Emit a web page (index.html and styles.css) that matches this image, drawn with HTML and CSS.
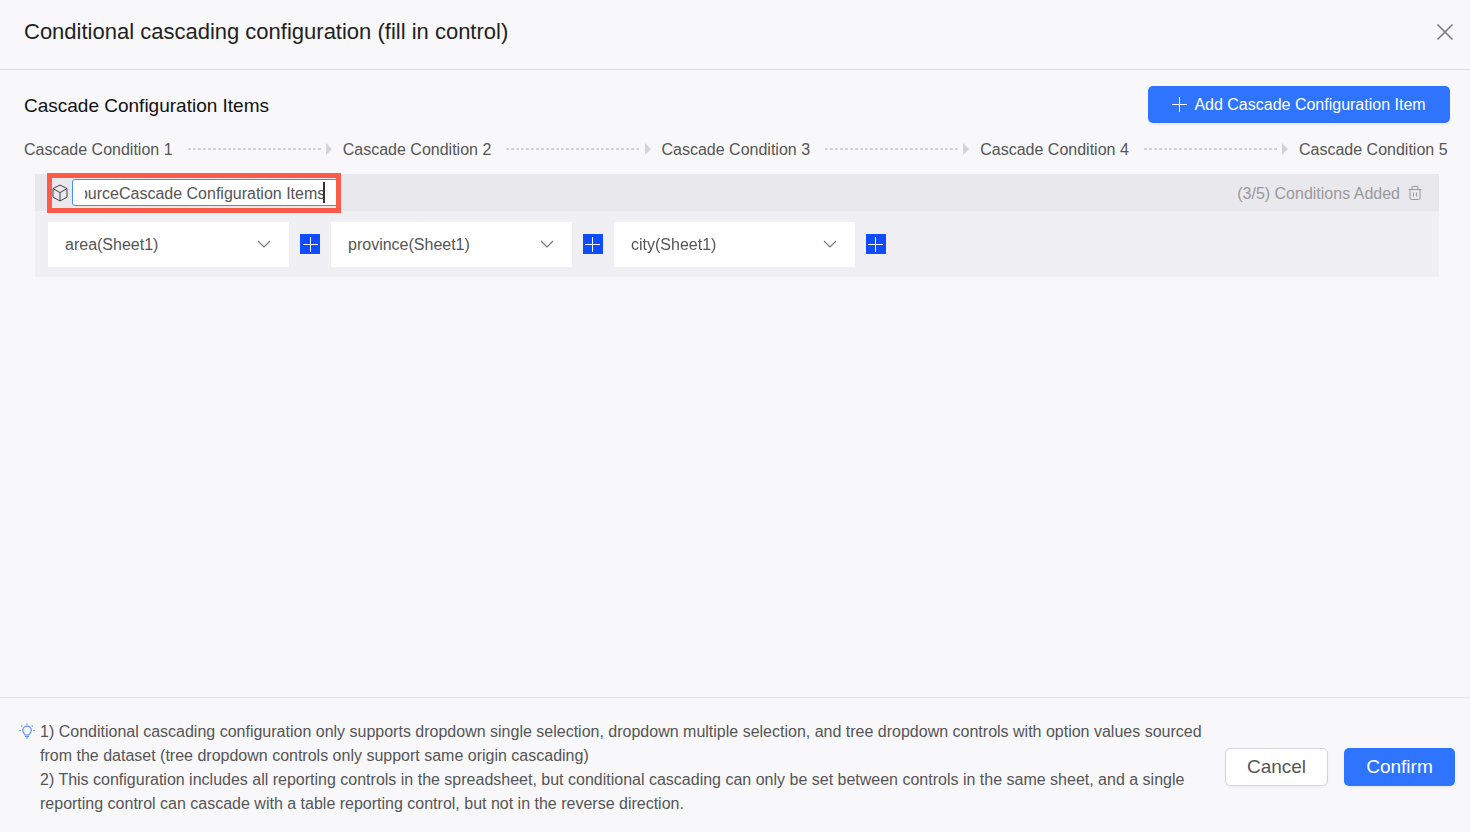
FILE: index.html
```html
<!DOCTYPE html>
<html lang="en">
     <head>
          <meta charset="UTF-8" />
          <meta
               name="viewport"
               content="width=device-width, initial-scale=1.0" />
          <title>Conditional cascading configuration</title>
          <link rel="stylesheet" href="styles.css">
     </head>
     <body>
          <header>
               <h1>Conditional cascading configuration (fill in control)</h1>
               <button type="button" class="close" aria-label="Close">
                    <svg viewBox="0 0 18 18"><path d="M1.5 1.5l15 15M16.5 1.5l-15 15" /></svg>
               </button>
          </header>

          <main>
               <div class="toolbar">
                    <h2>Cascade Configuration Items</h2>
                    <button type="button" class="primary add">
                         <svg viewBox="0 0 15 15"><path d="M7.5 0v15M0 7.5h15" /></svg>
                         Add Cascade Configuration Item
                    </button>
               </div>

               <ol class="steps">
                    <li>Cascade Condition 1</li>
                    <li>Cascade Condition 2</li>
                    <li>Cascade Condition 3</li>
                    <li>Cascade Condition 4</li>
                    <li>Cascade Condition 5</li>
               </ol>

               <section class="card">
                    <div class="card-head">
                         <div class="name-box">
                              <svg class="cube" viewBox="0 0 16 18"><path d="M8 1l7 3.6v8.6L8 17l-7-3.8V4.6zM1 4.6l7 4 7-4M8 8.6V17" /></svg>
                              <input type="text" id="itemName" aria-label="Item name" value="Data SourceCascade Configuration Items" spellcheck="false" />
                              <span class="caret"></span>
                         </div>
                         <span class="count">(3/5) Conditions Added</span>
                         <button type="button" class="trash" aria-label="Delete">
                              <svg viewBox="0 0 14 14"><path d="M.5 3.5h13M4 3.5v-3h6v3M2 3.5V12q0 1.5 1.5 1.5h7q1.5 0 1.5-1.5V3.5M5.5 6.5v4M8.5 6.5v4" /></svg>
                         </button>
                    </div>
                    <div class="card-body">
                         <div class="select">
                              <select aria-label="Condition 1"><option>area(Sheet1)</option></select>
                              <svg viewBox="0 0 14 8"><path d="M1 1l6 6 6-6" /></svg>
                         </div>
                         <button type="button" class="plus" aria-label="Add after condition 1">
                              <svg viewBox="0 0 20 20"><path d="M10.5 3v15M3 10.5h15" /></svg>
                         </button>
                         <div class="select">
                              <select aria-label="Condition 2"><option>province(Sheet1)</option></select>
                              <svg viewBox="0 0 14 8"><path d="M1 1l6 6 6-6" /></svg>
                         </div>
                         <button type="button" class="plus" aria-label="Add after condition 2">
                              <svg viewBox="0 0 20 20"><path d="M9.5 3v15M2 10.5h15" /></svg>
                         </button>
                         <div class="select">
                              <select aria-label="Condition 3"><option>city(Sheet1)</option></select>
                              <svg viewBox="0 0 14 8"><path d="M1 1l6 6 6-6" /></svg>
                         </div>
                         <button type="button" class="plus" aria-label="Add after condition 3">
                              <svg viewBox="0 0 20 20"><path d="M9.5 3v15M2 10.5h15" /></svg>
                         </button>
                    </div>
               </section>
          </main>

          <footer>
               <svg class="bulb" viewBox="0 0 16 16">
                    <path d="M6 12c0-1.2-2.3-1.9-2.3-4.5a4.3 4.3 0 0 1 8.6 0c0 2.6-2.3 3.3-2.3 4.500z" />
                    <path d="M6 13.5h4M7 15h2M8 .3v1.400M2.300 2.500l1 1M13.700 2.500l-1 1M.200 7.500h1.500M14.300 7.500h1.500" />
               </svg>
               <p>
                    1) Conditional cascading configuration only supports dropdown single selection, dropdown multiple selection, and tree dropdown controls with option values sourced from the dataset (tree dropdown controls only support same origin cascading)<br>
                    2) This configuration includes all reporting controls in the spreadsheet, but conditional cascading can only be set between controls in the same sheet, and a single reporting control can cascade with a table reporting control, but not in the reverse direction.
               </p>
               <button type="button" class="cancel">Cancel</button>
               <button type="button" class="primary confirm">Confirm</button>
          </footer>

          <script>
               let itemName = document.querySelector("#itemName");
               itemName.focus();
               itemName.setSelectionRange(itemName.value.length, itemName.value.length);
               itemName.scrollLeft = itemName.scrollWidth;
          </script>
     </body>
</html>
```
FILE: styles.css
```css
* {
     padding: 0;
     margin: 0;
     box-sizing: border-box;
}
body {
     min-height: 100vh;
     display: flex;
     flex-direction: column;
     background-color: #f8f8fa;
     color: #555;
     font-family: "Liberation Sans", Arial, sans-serif;
     font-size: 16px;
     line-height: 24px;
}
button,
input,
select {
     font: inherit;
     color: inherit;
     border: none;
     outline: none;
     background: none;
}
button {
     cursor: pointer;
}
svg {
     display: block;
     flex: none;
     fill: none;
     stroke: currentColor;
}
header {
     height: 70px;
     padding: 0 16px 5px 24px;
     display: flex;
     align-items: center;
     justify-content: space-between;
     border-bottom: 1px solid #dcdcde;
}
h1 {
     font-size: 22px;
     font-weight: 400;
     color: #222;
}
.close {
     color: #777;
}
.close svg {
     width: 18px;
     height: 18px;
     stroke-width: 1.5;
}
main {
     flex: 1;
     padding: 16px 20px 16px 24px;
}
.toolbar {
     display: flex;
     align-items: center;
     justify-content: space-between;
}
h2 {
     padding-top: 2px;
     font-size: 19px;
     font-weight: 400;
     color: #111;
}
.primary {
     background-color: #2e74ff;
     color: white;
     border-radius: 5px;
     box-shadow: 0 2px 2px rgba(0, 0, 0, 0.05);
}
.add {
     width: 302px;
     height: 37px;
     display: flex;
     align-items: center;
     justify-content: center;
     gap: 7px;
}
.add svg {
     width: 15px;
     height: 15px;
}

.steps {
     list-style-type: none;
     display: flex;
     margin: 15px 0 12px;
}
.steps li {
     display: flex;
     align-items: center;
     flex: 1;
     white-space: nowrap;
}
.steps li:last-child {
     flex: none;
     width: 151px;
}
/* dotted line and arrow head between two steps */
.steps li:not(:last-child)::before {
     content: "";
     order: 1;
     flex: 1;
     height: 2px;
     margin: 0 4px 3px 15px;
     background: repeating-linear-gradient(90deg, #d4d4d6 0 3px, transparent 3px 5px);
}
.steps li:not(:last-child)::after {
     content: "";
     order: 2;
     margin: 0 11px 2px 0;
     border: 6px solid transparent;
     border-left-color: #d4d4d6;
     border-right: none;
}

.card {
     margin: 0 11px;
     background-color: #f0eff4;
}
.card-head {
     height: 37px;
     padding: 0 17px;
     display: flex;
     align-items: center;
     background-color: #e9e8ed;
     color: #999;
}
.name-box {
     position: relative;
     display: flex;
     align-items: center;
     gap: 4px;
     color: #444;
}
/* red highlight over the field */
.name-box::after {
     content: "";
     position: absolute;
     inset: -6px -3px -7px -5px;
     border: 5px solid #ff5a4a;
     pointer-events: none;
}
.cube {
     width: 16px;
     height: 18px;
}
.name-box input {
     width: 266px;
     height: 27px;
     padding: 2px 12px 0;
     border: 1px solid #4a8cf5;
     border-radius: 3px;
     background-color: white;
     color: #555;
     caret-color: transparent;
}
.caret {
     position: absolute;
     right: 13px;
     top: 3px;
     width: 2px;
     height: 21px;
     background-color: #333;
}
.count {
     margin-left: auto;
     padding-top: 2px;
}
.trash {
     margin-left: 8px;
}
.trash svg {
     width: 14px;
     height: 14px;
}
.card-body {
     padding: 11px 13px 10px;
     display: flex;
     align-items: center;
}
.select {
     position: relative;
     width: 241px;
}
.select select {
     display: block;
     appearance: none;
     width: 100%;
     height: 45px;
     padding: 0 40px 0 17px;
     background-color: white;
}
.select svg {
     position: absolute;
     right: 18px;
     top: 18px;
     width: 14px;
     height: 8px;
     stroke-width: 1.2;
     color: #777;
     pointer-events: none;
}
.plus {
     margin: 0 11px 2px;
     background-color: #0f4bff;
     color: white;
}
.plus svg {
     width: 20px;
     height: 20px;
}

footer {
     padding: 22px 15px 16px 19px;
     display: flex;
     align-items: center;
     border-top: 1px solid #e3e3e5;
}
.bulb {
     width: 16px;
     height: 16px;
     margin-top: 3px;
     align-self: flex-start;
     stroke-width: 1.2;
     color: #5b93f7;
}
footer p {
     flex: 1;
     margin-left: 5px;
}
footer button {
     height: 38px;
     margin: 0 0 2px 16px;
     font-size: 19px;
     border-radius: 5px;
}
.cancel {
     width: 103px;
     margin-left: 0;
     border: 1px solid #d4d4d6;
     background-color: white;
     box-shadow: 0 2px 2px rgba(0, 0, 0, 0.03);
}
.confirm {
     width: 111px;
}
```
